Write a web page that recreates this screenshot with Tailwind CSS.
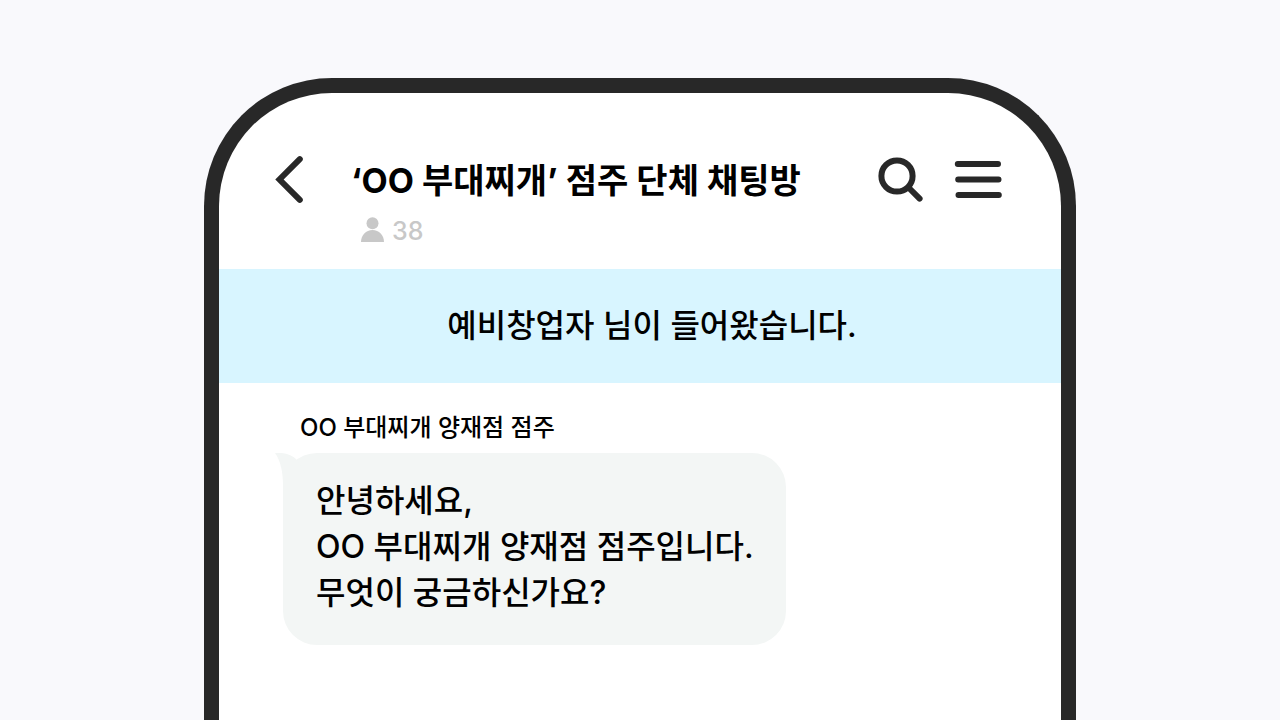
<!DOCTYPE html>
<html lang="ko">

<head>
    <meta charset="UTF-8">
    <meta name="viewport" content="width=device-width, initial-scale=1.0">
    <title>점주 단체 채팅방</title>
    <script src="https://cdn.jsdelivr.net/npm/@tailwindcss/browser@4"></script>
</head>

<body class="bg-[#f9f9fc] h-screen overflow-hidden flex flex-col items-center pt-[78px] font-['Inter','Noto_Sans_CJK_KR',sans-serif] text-black">
    <!-- Phone frame, runs off the bottom of the page -->
    <div class="w-full max-w-[872px] flex-1 bg-white border-[15px] border-b-0 border-[#282828] rounded-t-[128px] flex flex-col">
        <header class="flex items-start gap-12 pt-16 pb-6 pl-14 pr-[59px]">
            <button type="button" aria-label="뒤로" class="h-12 shrink-0 flex items-center text-[#282828]">
                <svg class="overflow-visible" width="28" height="48" viewBox="0 0 28 48" fill="none" stroke="currentColor" stroke-width="6" stroke-linecap="round" stroke-linejoin="miter">
                    <path d="M24.800 2.200L4.500 22.500L24.800 42.900" />
                </svg>
            </button>

            <div class="flex-1 min-w-0">
                <h1 class="text-[34px] leading-[48px] font-bold whitespace-nowrap">‘OO 부대찌개’ 점주 단체 채팅방</h1>
                <p class="mt-3 ml-[9px] flex items-center gap-2 text-[25px] leading-[28px] font-medium text-[#c8c8c8]">
                    <svg width="24" height="28" viewBox="0 0 24 28" fill="currentColor" aria-hidden="true">
                        <circle cx="12.500" cy="6.300" r="6" />
                        <path d="M1 25C1 18.300 6 13 12.500 13S24 18.300 24 25Z" />
                    </svg>
                    38
                </p>
            </div>

            <div class="h-12 shrink-0 flex items-center gap-[30px] text-[#282828]">
                <button type="button" aria-label="검색">
                    <svg class="block" width="46" height="48" viewBox="0 0 46 48" fill="none" stroke="currentColor" stroke-width="6" stroke-linecap="round">
                        <circle cx="19" cy="19" r="15.600" />
                        <path d="M30.500 30.500L41.600 41.600" />
                    </svg>
                </button>
                <button type="button" aria-label="메뉴">
                    <svg class="block" width="48" height="48" viewBox="0 0 48 48" fill="none" stroke="currentColor" stroke-width="6" stroke-linecap="round">
                        <path d="M3.800 7H44M4.200 22.500H44.500M4.500 38H44.800" />
                    </svg>
                </button>
            </div>
        </header>

        <main>
            <!-- Join notice -->
            <p class="bg-[#d8f5ff] pt-[33px] pb-[33px] pl-6 text-center text-[32px] leading-[48px] font-medium">예비창업자 님이 들어왔습니다.</p>

            <!-- Message -->
            <article class="pl-16 pr-14 pt-7 flex flex-col items-start">
                <h2 class="pl-[17px] text-[24px] leading-[34px] font-medium">OO 부대찌개 양재점 점주</h2>
                <div class="relative mt-2 bg-[#f3f6f5] rounded-[34px] pl-[33px] pr-8 pt-[25px] pb-[29px] text-[32px] leading-[46px] font-medium">
                    <svg class="absolute top-0 -left-2 text-[#f3f6f5]" width="34" height="34" viewBox="0 0 34 34" fill="currentColor" aria-hidden="true">
                        <path d="M0 0C9 -0.800 17 1.500 22 7L30 20L8 34C8.300 21 6 8 0 0Z" />
                    </svg>
                    <p class="relative">안녕하세요,<br>OO 부대찌개 양재점 점주입니다.<br>무엇이 궁금하신가요?</p>
                </div>
            </article>
        </main>
    </div>
</body>

</html>
